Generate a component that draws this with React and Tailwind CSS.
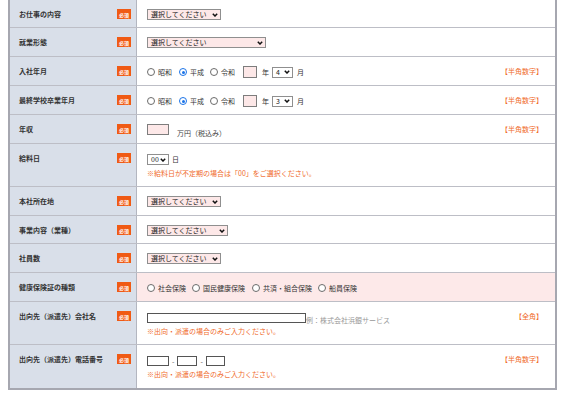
import React from "react";

function Badge() {
  return (
    <span className="inline-flex w-[14px] h-[10px] shrink-0 items-center justify-center bg-[#f05a14] text-white text-[5px] leading-none font-bold">
      必須
    </span>
  );
}

function Chev() {
  return (
    <svg width="6" height="4" viewBox="0 0 6 4" className="shrink-0">
      <path d="M0.8 0.8 L3 3 L5.2 0.8" fill="none" stroke="#111" strokeWidth="1.5" />
    </svg>
  );
}

function Sel({ className, text }) {
  return (
    <div
      className={
        "h-[11px] border border-[#8f8f8f] bg-[#fde8e8] flex items-center justify-between pl-[3px] pr-[2px] text-[7px] leading-none text-[#222] " +
        className
      }
    >
      <span>{text}</span>
      <Chev />
    </div>
  );
}

function Radio({ checked, className = "" }) {
  if (checked)
    return (
      <span className={"w-[8px] h-[8px] rounded-full border-[1.5px] border-[#1a73e8] bg-white flex items-center justify-center shrink-0 " + className}>
        <span className="block w-[3px] h-[3px] rounded-full bg-[#1a73e8]" />
      </span>
    );
  return <span className={"block w-[8px] h-[8px] rounded-full border border-[#6b6b6b] bg-white shrink-0 " + className} />;
}

function Hint({ children }) {
  return <span className="text-[7px] leading-[11px] text-[#f06a2a] whitespace-nowrap">{children}</span>;
}

function Note({ children }) {
  return <div className="text-[7px] leading-[10px] text-[#f06a2a] mt-[3px] whitespace-nowrap">{children}</div>;
}

function Row({ label, h, pink, hint, last, children }) {
  return (
    <div className={"flex " + h + (last ? "" : " border-b border-[#bdbec6]")}>
      <div className="w-[127px] shrink-0 bg-[#d9dfe9] border-r border-[#b3b6c0] flex items-start justify-between pl-[9px] pr-[5px] pt-[9px]">
        <span className="text-[7px] leading-[10px] font-semibold text-[#333] whitespace-nowrap">{label}</span>
        <Badge />
      </div>
      <div
        className={
          "flex-1 flex justify-between items-start pl-[10px] pr-[12px] pt-[9px] " +
          (pink ? "bg-[#fde9e9]" : "bg-white")
        }
      >
        <div className="flex flex-col">{children}</div>
        {hint ? <Hint>{hint}</Hint> : null}
      </div>
    </div>
  );
}

function Era({ month }) {
  return (
    <div className="flex items-center h-[12px] text-[7px] leading-none text-[#333]">
      <Radio />
      <span className="ml-[3px]">昭和</span>
      <Radio checked className="ml-[7px]" />
      <span className="ml-[3px]">平成</span>
      <Radio className="ml-[6px]" />
      <span className="ml-[3px]">令和</span>
      <span className="ml-[8px] w-[14px] h-[12px] border border-[#7d7d7d] bg-[#fde8e8]" />
      <span className="ml-[5px]">年</span>
      <Sel className="ml-[3px] w-[21px] bg-white" text={month} />
      <span className="ml-[4px]">月</span>
    </div>
  );
}

export default function App() {
  return (
    <div className="w-[567px] h-[396px] bg-white font-['Noto_Sans_CJK_JP','Noto_Sans',sans-serif] overflow-hidden">
      <div className="ml-[8px] w-[549px] border-l-2 border-r-2 border-b-2 border-[#a6a7b0] flex flex-col">
        <Row label="お仕事の内容" h="h-[28px]">
          <Sel className="w-[74px]" text="選択してください" />
        </Row>
        <Row label="就業形態" h="h-[29px]">
          <Sel className="w-[119px]" text="選択してください" />
        </Row>
        <Row label="入社年月" h="h-[29px]" hint="【半角数字】">
          <Era month="4" />
        </Row>
        <Row label="最終学校卒業年月" h="h-[29px]" hint="【半角数字】">
          <Era month="3" />
        </Row>
        <Row label="年収" h="h-[29px]" hint="【半角数字】">
          <div className="flex items-end text-[7px] leading-none text-[#444]">
            <span className="w-[22px] h-[11px] border border-[#7d7d7d] bg-[#fde8e8]" />
            <span className="ml-[8px] mb-[-2px]">万円（税込み）</span>
          </div>
        </Row>
        <Row label="給料日" h="h-[43px]">
          <div className="flex items-center text-[7px] leading-none text-[#333] mt-[1px]">
            <Sel className="w-[22px] bg-white" text="00" />
            <span className="ml-[3px]">日</span>
          </div>
          <Note>※給料日が不定期の場合は「00」をご選択ください。</Note>
        </Row>
        <Row label="本社所在地" h="h-[29px]">
          <Sel className="w-[74px]" text="選択してください" />
        </Row>
        <Row label="事業内容（業種）" h="h-[28px]">
          <Sel className="w-[81px]" text="選択してください" />
        </Row>
        <Row label="社員数" h="h-[29px]">
          <Sel className="w-[74px]" text="選択してください" />
        </Row>
        <Row label="健康保険証の種類" h="h-[29px]" pink>
          <div className="flex items-center h-[12px] text-[7px] leading-none text-[#333]">
            <Radio />
            <span className="ml-[3px]">社会保険</span>
            <Radio className="ml-[6px]" />
            <span className="ml-[3px]">国民健康保険</span>
            <Radio className="ml-[7px]" />
            <span className="ml-[3px]">共済・組合保険</span>
            <Radio className="ml-[6px]" />
            <span className="ml-[3px]">船員保険</span>
          </div>
        </Row>
        <Row label="出向先（派遣先）会社名" h="h-[43px]" hint="【全角】">
          <div className="flex items-end text-[7px] leading-none mt-[2px]">
            <span className="w-[159px] h-[10px] border border-[#555] bg-white" />
            <span className="text-[#999] mb-[-1px]">例：株式会社浜銀サービス</span>
          </div>
          <Note>※出向・派遣の場合のみご入力ください。</Note>
        </Row>
        <Row label="出向先（派遣先）電話番号" h="h-[43px]" hint="【半角数字】" last>
          <div className="flex items-center text-[7px] leading-none text-[#555] mt-[2px]">
            <span className="w-[22px] h-[10px] border border-[#555] bg-white" />
            <span className="mx-[3px]">-</span>
            <span className="w-[20px] h-[10px] border border-[#555] bg-white" />
            <span className="mx-[3px]">-</span>
            <span className="w-[19px] h-[10px] border border-[#555] bg-white" />
          </div>
          <Note>※出向・派遣の場合のみご入力ください。</Note>
        </Row>
      </div>
    </div>
  );
}
